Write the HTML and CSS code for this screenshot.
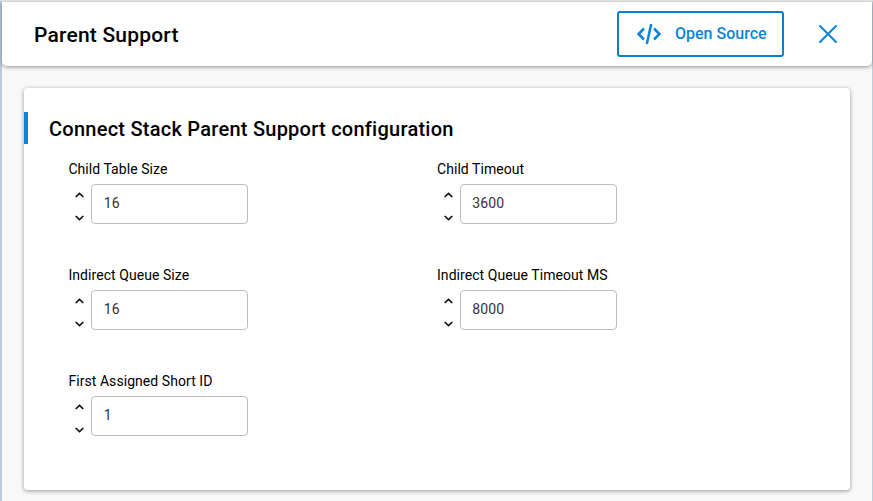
FILE: index.html
```html
<!DOCTYPE html>
<html lang="en">
<head>
<meta charset="utf-8">
<title>Parent Support</title>
<link rel="stylesheet" href="styles.css">
</head>
<body>
<div class="panel">
  <header class="header">
    <h1>Parent Support</h1>
    <button class="source" type="button">
      <svg width="24" height="22" viewBox="0 0 24 22"><path d="M7 5.5L1.6 11L7 16.5M17 5.5L22.4 11L17 16.5M14.2 1L9.8 21"/></svg>
      <span>Open Source</span>
    </button>
    <button class="close" type="button" aria-label="Close">
      <svg width="18" height="18" viewBox="0 0 18 18"><path d="M1 1L17 17M17 1L1 17"/></svg>
    </button>
  </header>
  <main class="card">
    <h2>Connect Stack Parent Support configuration</h2>
    <div class="fields">
      <div class="field">
        <div class="label">Child Table Size</div>
        <div class="row"><div class="steps"><svg viewBox="0 0 9 6"><path d="M.7 5L4.5 1.4L8.3 5"/></svg><svg viewBox="0 0 9 6"><path d="M.7 1L4.5 4.6L8.3 1"/></svg></div><div class="value">16</div></div>
      </div>
      <div class="field">
        <div class="label">Child Timeout</div>
        <div class="row"><div class="steps"><svg viewBox="0 0 9 6"><path d="M.7 5L4.5 1.4L8.3 5"/></svg><svg viewBox="0 0 9 6"><path d="M.7 1L4.5 4.6L8.3 1"/></svg></div><div class="value">3600</div></div>
      </div>
      <div class="field">
        <div class="label">Indirect Queue Size</div>
        <div class="row"><div class="steps"><svg viewBox="0 0 9 6"><path d="M.7 5L4.5 1.4L8.3 5"/></svg><svg viewBox="0 0 9 6"><path d="M.7 1L4.5 4.6L8.3 1"/></svg></div><div class="value">16</div></div>
      </div>
      <div class="field">
        <div class="label">Indirect Queue Timeout MS</div>
        <div class="row"><div class="steps"><svg viewBox="0 0 9 6"><path d="M.7 5L4.5 1.4L8.3 5"/></svg><svg viewBox="0 0 9 6"><path d="M.7 1L4.5 4.6L8.3 1"/></svg></div><div class="value">8000</div></div>
      </div>
      <div class="field">
        <div class="label">First Assigned Short ID</div>
        <div class="row"><div class="steps"><svg viewBox="0 0 9 6"><path d="M.7 5L4.5 1.4L8.3 5"/></svg><svg viewBox="0 0 9 6"><path d="M.7 1L4.5 4.6L8.3 1"/></svg></div><div class="value">1</div></div>
      </div>
    </div>
  </main>
</div>
</body>
</html>
```
FILE: styles.css
```css
* { box-sizing: border-box; }
body {
  margin: 0;
  font-family: Roboto, "Liberation Sans", sans-serif;
  color: #000;
  overflow: hidden;
}
svg { display: block; fill: none; }
.panel {
  height: 501px;
  border-top: 2px solid #ececec;
  border-left: 2px solid #bccbdc;
  border-right: 1px solid #bccfe0;
  background: #f8f8f8;
}
.header {
  display: flex;
  align-items: center;
  height: 64px;
  padding: 0 35px 0 32px;
  background: #fff;
  border-radius: 0 0 5px 5px;
  box-shadow: 0 1px 4px rgba(0, 0, 0, .42);
}
h1, h2 {
  margin: 0;
  font-size: 20px;
  font-weight: 500;
  line-height: 32px;
  letter-spacing: .25px;
}
h1 {
  flex: 1;
  padding-top: 2px;
  font-size: 21px;
  letter-spacing: .2px;
}
.source, .close {
  border: 0;
  background: none;
  color: #0a84d8;
  font: inherit;
}
.source {
  display: flex;
  align-items: center;
  gap: 14px;
  width: 167px;
  height: 46px;
  padding: 0 0 0 18px;
  border: 2px solid #0a7fcd;
  border-radius: 3px;
  font-size: 16px;
  font-weight: 500;
}
.source span { padding-bottom: 2px; }
.source svg { stroke: #0a84d8; stroke-width: 2.5; }
.close { margin-left: 35px; padding: 0; }
.close svg { stroke: #0a84d8; stroke-width: 2; stroke-linecap: round; }
.card {
  height: 402px;
  margin: 22px 22px 0;
  padding-top: 24px;
  background: #fff;
  border-radius: 4px;
  box-shadow: 0 1px 4px rgba(0, 0, 0, .4);
}
h2 {
  height: 32px;
  padding: 1px 0 0 21px;
  border-left: 4px solid #0a87dc;
}
.fields {
  display: grid;
  grid-template-columns: 368.6px 1fr;
  grid-auto-rows: 106px;
  padding: 15px 0 0 44.4px;
}
.label {
  height: 25px;
  font-size: 14px;
  line-height: 20px;
  letter-spacing: .06px;
}
.row { display: flex; height: 40px; }
.steps {
  display: flex;
  flex-direction: column;
  justify-content: space-between;
  width: 23px;
  padding: 8px 0 3px 7px;
}
.steps svg {
  width: 9px;
  height: 6px;
  stroke: #111;
  stroke-width: 1.7;
}
.value {
  width: 157px;
  padding-left: 11.3px;
  border: 1px solid #bdbdbd;
  border-radius: 4px;
  color: #333;
  font-size: 14px;
  line-height: 37px;
  letter-spacing: .1px;
}
```
